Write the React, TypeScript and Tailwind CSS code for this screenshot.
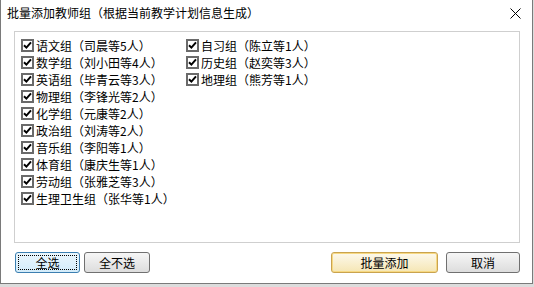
const groups1 = [
  "语文组（司晨等5人）",
  "数学组（刘小田等4人）",
  "英语组（毕青云等3人）",
  "物理组（李锋光等2人）",
  "化学组（元康等2人）",
  "政治组（刘涛等2人）",
  "音乐组（李阳等1人）",
  "体育组（康庆生等1人）",
  "劳动组（张雅芝等3人）",
  "生理卫生组（张华等1人）",
];

const groups2 = ["自习组（陈立等1人）", "历史组（赵奕等3人）", "地理组（熊芳等1人）"];

function Check({ label }: { label: string }) {
  return (
    <div className="flex items-center h-[17px]">
      <span className="w-[13px] h-[13px] border-2 border-[#6a6a6a] bg-white flex items-center justify-center shrink-0">
        <svg width="9" height="9" viewBox="0 0 9 9">
          <path d="M1 4.2 L3.4 6.6 L8 1.4" stroke="#000" strokeWidth="2" fill="none" />
        </svg>
      </span>
      <span className="ml-[2px] whitespace-nowrap">{label}</span>
    </div>
  );
}

export default function App() {
  return (
    <div className="w-[534px] h-[287px] bg-[#dcdcdc] text-[12px] text-black" style={{ fontFamily: '"Noto Sans CJK SC", "Liberation Sans", sans-serif' }}>
      <div className="w-[533px] h-[284px] bg-white border-l border-r border-b border-[#7a7a7a] flex flex-col">
        <div className="h-[31px] flex items-start justify-between pl-[6px] pr-[11px] pt-[5px]">
          <span className="leading-[16px]">批量添加教师组（根据当前教学计划信息生成）</span>
          <svg width="11" height="11" viewBox="0 0 11 11" className="mt-[3px]">
            <path d="M0.5 0.5 L10.5 10.5 M10.5 0.5 L0.5 10.5" stroke="#000" strokeWidth="1" />
          </svg>
        </div>
        <div className="ml-[13px] mr-[12px] h-[212px] border border-[#cfcfcf] pt-[5px] pl-[6px] flex">
          <div className="w-[165px] flex flex-col">
            {groups1.map((g) => (
              <Check key={g} label={g} />
            ))}
          </div>
          <div className="flex flex-col">
            {groups2.map((g) => (
              <Check key={g} label={g} />
            ))}
          </div>
        </div>
        <div className="mt-[9px] flex pl-[14px] pr-[12px]">
          <button className="w-[65px] h-[21px] rounded-[3px] border border-[#3c7fb1] bg-gradient-to-b from-[#eaf6fd] to-[#d3ecfa] flex items-center justify-center p-[2px]">
            <span className="w-full h-full border border-dotted border-[#000] flex items-center justify-center">全选</span>
          </button>
          <button className="ml-[4px] w-[66px] h-[21px] rounded-[3px] border border-[#707070] bg-gradient-to-b from-[#f6f6f6] to-[#dddddd]">全不选</button>
          <div className="flex-1" />
          <button className="w-[107px] h-[21px] rounded-[3px] border border-[#c9a34f] bg-gradient-to-b from-[#fdf9ec] to-[#f5e6b4] shadow-[inset_0_0_0_1px_#f7d982]">批量添加</button>
          <button className="ml-[8px] w-[74px] h-[21px] rounded-[3px] border border-[#707070] bg-gradient-to-b from-[#f6f6f6] to-[#dddddd]">取消</button>
        </div>
      </div>
    </div>
  );
}
